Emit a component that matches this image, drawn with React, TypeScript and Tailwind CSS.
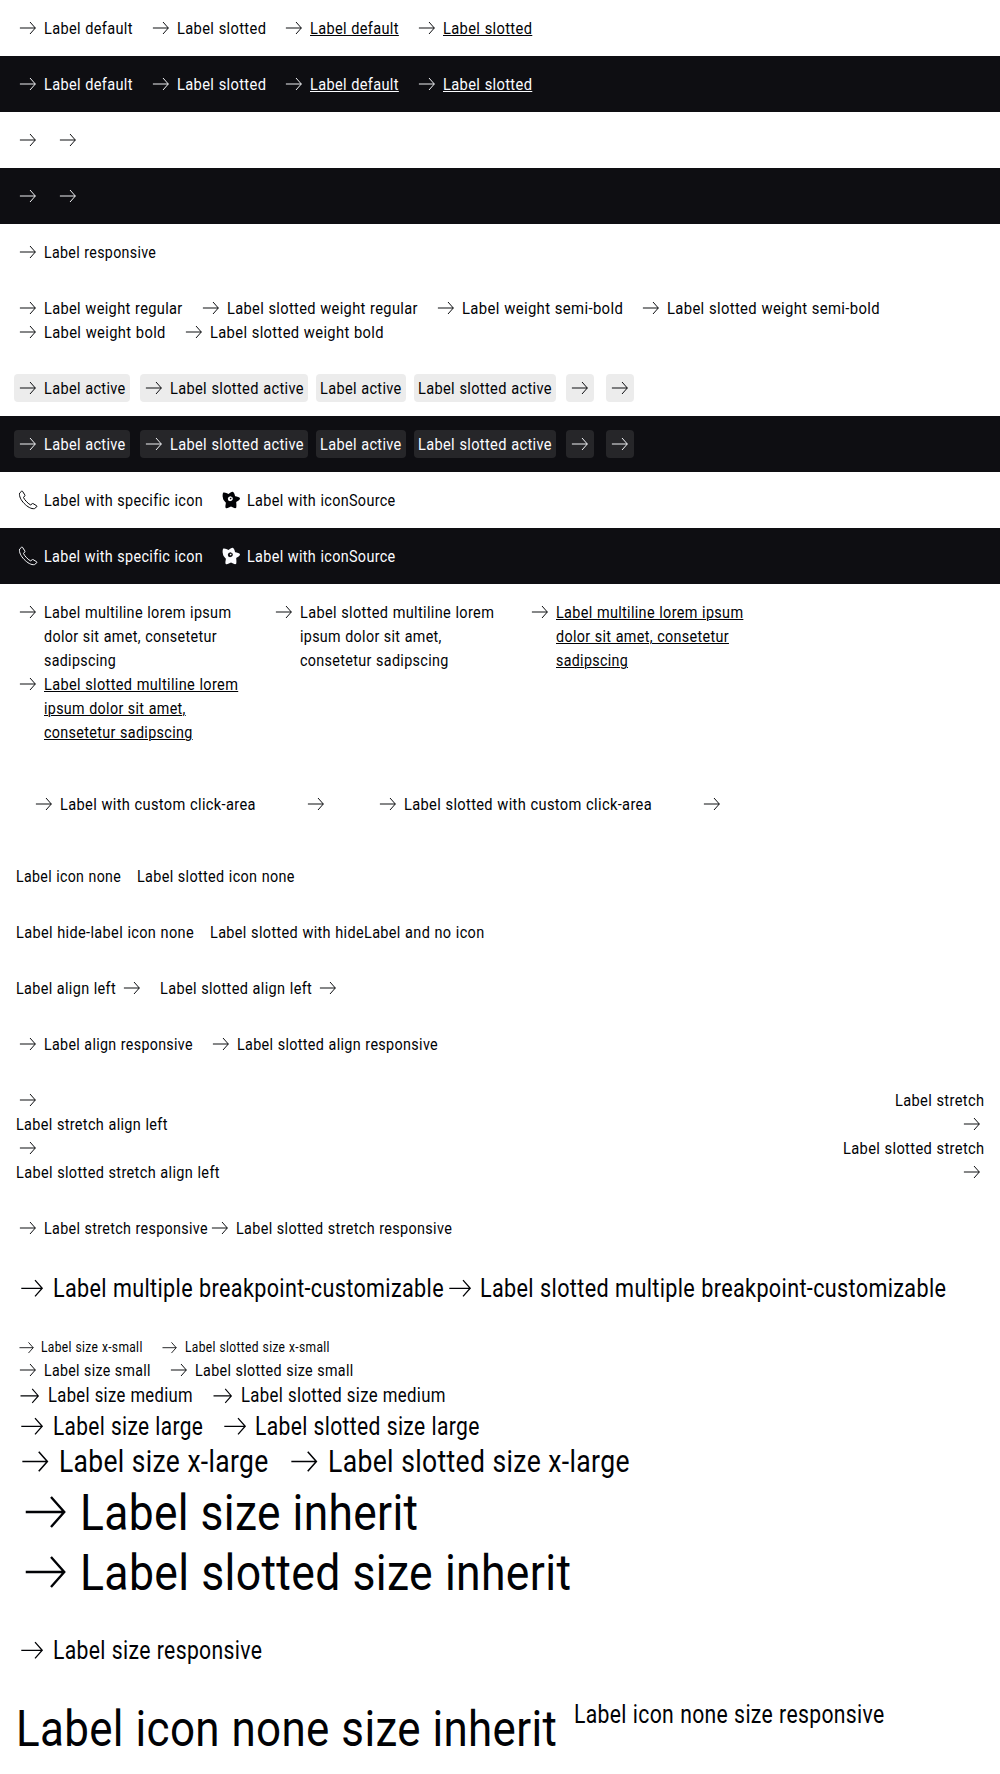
import { useLayoutEffect, useRef, type ReactNode } from 'react';

type Size = 'xs' | 'sm' | 'md' | 'lg' | 'xl' | 'inherit';
type IconName = 'arrow' | 'phone' | 'star' | 'none';

const textSize: Record<Size, string> = {
  xs: 'text-[14px] leading-[21.4px] h-[21.4px]',
  sm: 'text-[17px] leading-[24px] h-6',
  md: 'text-[20.2px] leading-[27.8px] h-[27.8px]',
  lg: 'text-[24.9px] leading-[34.4px] h-[32.6px]',
  xl: 'text-[31px] leading-[40.6px] h-[39.6px]',
  inherit: 'text-[50.6px] leading-[62px] h-[60px]',
};

const iconSize: Record<Size, string> = {
  xs: 'size-[21.4px]',
  sm: 'size-6',
  md: 'size-[27.8px]',
  lg: 'size-[32.6px]',
  xl: 'size-[39px]',
  inherit: 'size-[60px]',
};

/** One line of text, condensed horizontally to the given width. */
function Line({ text, width, size = 'sm', underline }: { text: string; width: number; size?: Size; underline?: boolean }) {
  const ref = useRef<HTMLSpanElement>(null);
  useLayoutEffect(() => {
    const el = ref.current;
    if (!el) return;
    el.style.transform = `scaleX(${width / el.offsetWidth})`;
  }, [text, width]);
  return (
    <span className={`block shrink-0 whitespace-nowrap ${textSize[size]}`} style={{ width }}>
      <span
        ref={ref}
        className={`inline-block origin-left ${underline ? 'underline decoration-1 underline-offset-[1px]' : ''}`}
      >
        {text}
      </span>
    </span>
  );
}

function Icon({ name = 'arrow', size = 'sm' }: { name?: IconName; size?: Size }) {
  return (
    <svg viewBox="0 0 24 24" className={`block shrink-0 ${iconSize[size]}`} fill="none" stroke="currentColor" strokeWidth="0.95">
      {name === 'arrow' && <path d="M3.900 12H19.400M14 6L19.300 12L14 18" />}
      {name === 'phone' && (
        <path
          strokeWidth="1"
          strokeLinejoin="round"
          d="M5.6 3.2L3.6 5.1C2.9 8.2 5 12.2 8.1 15.4C11.400 18.800 15.300 21.200 18.500 20.600L20.900 18.600C21.100 18.300 21 18 20.700 17.800L17.100 15.600C16.800 15.400 16.500 15.500 16.200 15.700L14.700 16.900C12.700 16.300 8.300 11.700 7.500 9.500L8.800 7.800C9 7.500 9 7.200 8.800 6.900L6.500 3.300C6.300 3 5.900 2.900 5.600 3.200Z"
        />
      )}
      {name === 'star' && (
        <path
          stroke="none"
          fill="currentColor"
          fillRule="evenodd"
          d="M13.600 3.800C14.900 3.800 15.600 6.200 16.100 8.200C17.700 8.300 20.900 9.200 21 10.400C21.100 11.700 18.500 13 17.200 13.900C17.300 15.700 17.800 19.300 16.900 20.100C15.700 20.700 13.500 19.200 12 18.600C10.500 19.200 8 20.700 6.800 20C5.900 19.300 6.700 16.300 6.900 14.700C5.600 13.400 3.600 11.300 4 10.100C3.400 8.600 3.500 5.500 4.300 4.600C5.900 4.100 8 5.500 9.500 6C10.800 5.100 12.300 3.800 13.600 3.800ZM11.500 8.300L9.600 9L8.800 10.800L9.300 12.500L11 13.200L13 12.600L13.900 11L13.400 9.200ZM12.200 9.500L12.500 10.800L11.300 11.500L10.700 10.300Z"
        />
      )}
    </svg>
  );
}

interface LinkProps {
  text?: string;
  w?: number;
  size?: Size;
  icon?: IconName;
  underline?: boolean;
  reverse?: boolean;
}

function PureLink({ text, w = 0, size = 'sm', icon = 'arrow', underline, reverse }: LinkProps) {
  return (
    <a className={`flex shrink-0 gap-1 ${reverse ? 'flex-row-reverse' : ''}`}>
      {icon !== 'none' && <Icon name={icon} size={size} />}
      {text && <Line text={text} width={w} size={size} underline={underline} />}
    </a>
  );
}

function ActiveLink({ text, w, icon = 'arrow' }: LinkProps) {
  const inset = icon === 'none' ? '-mx-1 px-1' : text ? '-ml-0.5 pl-0.5 -mr-1 pr-1' : '-mx-0.5 px-0.5';
  return (
    <span className={`-my-0.5 rounded-[4px] bg-[#949598]/18 py-0.5 ${inset}`}>
      <PureLink text={text} w={w} icon={icon} />
    </span>
  );
}

function Row({ dark, className = 'gap-4 p-4', children }: { dark?: boolean; className?: string; children: ReactNode }) {
  return (
    <section className={`flex ${dark ? 'bg-[#0e0e12] text-[#fbfcff]' : 'bg-white text-[#010205]'} ${className}`}>
      {children}
    </section>
  );
}

function Multiline({ lines, underline }: { lines: [string, number][]; underline?: boolean }) {
  return (
    <a className="flex w-60 gap-1">
      <Icon />
      <span>
        {lines.map(([text, w]) => (
          <Line key={text} text={text} width={w} underline={underline} />
        ))}
      </span>
    </a>
  );
}

function Stretch({ right, rightWidth, left, leftWidth }: { right: string; rightWidth: number; left: string; leftWidth: number }) {
  return (
    <>
      <a className="flex justify-between">
        <Icon />
        <Line text={right} width={rightWidth} />
      </a>
      <a className="flex justify-between">
        <Line text={left} width={leftWidth} />
        <Icon />
      </a>
    </>
  );
}

const plainLines: [string, number][] = [
  ['Label multiline lorem ipsum', 187.5],
  ['dolor sit amet, consetetur', 173],
  ['sadipscing', 72],
];
const slottedLines: [string, number][] = [
  ['Label slotted multiline lorem', 194],
  ['ipsum dolor sit amet,', 142],
  ['consetetur sadipscing', 148.5],
];

export default function App() {
  return (
    <main className="h-[1774px] w-[1000px] overflow-hidden bg-white font-[Roboto,sans-serif] font-normal tracking-[0.025em] [word-spacing:0.03em]">
      {[false, true].map((dark) => (
        <Row key={String(dark)} dark={dark}>
          <PureLink text="Label default" w={89} />
          <PureLink text="Label slotted" w={89} />
          <PureLink text="Label default" w={89} underline />
          <PureLink text="Label slotted" w={89} underline />
        </Row>
      ))}
      {[false, true].map((dark) => (
        <Row key={String(dark)} dark={dark}>
          <PureLink />
          <PureLink />
        </Row>
      ))}
      <Row>
        <PureLink text="Label responsive" w={112} />
      </Row>
      <Row className="flex-wrap gap-x-4 p-4">
        <PureLink text="Label weight regular" w={139} />
        <PureLink text="Label slotted weight regular" w={191} />
        <PureLink text="Label weight semi-bold" w={161} />
        <PureLink text="Label slotted weight semi-bold" w={212.5} />
        <PureLink text="Label weight bold" w={122} />
        <PureLink text="Label slotted weight bold" w={174} />
      </Row>
      {[false, true].map((dark) => (
        <Row key={String(dark)} dark={dark}>
          <ActiveLink text="Label active" w={82} />
          <ActiveLink text="Label slotted active" w={134} />
          <ActiveLink text="Label active" w={82} icon="none" />
          <ActiveLink text="Label slotted active" w={134} icon="none" />
          <ActiveLink />
          <ActiveLink />
        </Row>
      ))}
      {[false, true].map((dark) => (
        <Row key={String(dark)} dark={dark}>
          <PureLink text="Label with specific icon" w={159} icon="phone" />
          <PureLink text="Label with iconSource" w={149} icon="star" />
        </Row>
      ))}
      <Row className="flex-wrap gap-x-4 p-4">
        <Multiline lines={plainLines} />
        <Multiline lines={slottedLines} />
        <Multiline lines={plainLines} underline />
        <Multiline lines={slottedLines} underline />
      </Row>
      <Row className="gap-12 p-8">
        <PureLink text="Label with custom click-area" w={196} />
        <PureLink />
        <PureLink text="Label slotted with custom click-area" w={248} />
        <PureLink />
      </Row>
      <Row>
        <PureLink text="Label icon none" w={105} icon="none" />
        <PureLink text="Label slotted icon none" w={157.5} icon="none" />
      </Row>
      <Row>
        <PureLink text="Label hide-label icon none" w={178} icon="none" />
        <PureLink text="Label slotted with hideLabel and no icon" w={274.5} icon="none" />
      </Row>
      <Row>
        <PureLink text="Label align left" w={100} reverse />
        <PureLink text="Label slotted align left" w={152} reverse />
      </Row>
      <Row>
        <PureLink text="Label align responsive" w={149} />
        <PureLink text="Label slotted align responsive" w={201} />
      </Row>
      <Row className="flex-col p-4">
        <Stretch right="Label stretch" rightWidth={89.5} left="Label stretch align left" leftWidth={152} />
        <Stretch right="Label slotted stretch" rightWidth={141.5} left="Label slotted stretch align left" leftWidth={204} />
      </Row>
      <Row className="p-4">
        <PureLink text="Label stretch responsive" w={164} />
        <PureLink text="Label slotted stretch responsive" w={216} />
      </Row>
      <Row className="p-4">
        <PureLink size="lg" text="Label multiple breakpoint-customizable" w={391} />
        <PureLink size="lg" text="Label slotted multiple breakpoint-customizable" w={466} />
      </Row>
      <Row className="flex-col p-4">
        <div className="flex gap-4">
          <PureLink size="xs" text="Label size x-small" w={102} />
          <PureLink size="xs" text="Label slotted size x-small" w={145} />
        </div>
        <div className="flex gap-4">
          <PureLink size="sm" text="Label size small" w={106.5} />
          <PureLink size="sm" text="Label slotted size small" w={159} />
        </div>
        <div className="flex gap-4">
          <PureLink size="md" text="Label size medium" w={145} />
          <PureLink size="md" text="Label slotted size medium" w={205} />
        </div>
        <div className="flex gap-4">
          <PureLink size="lg" text="Label size large" w={150} />
          <PureLink size="lg" text="Label slotted size large" w={225} />
        </div>
        <div className="flex gap-4">
          <PureLink size="xl" text="Label size x-large" w={209.5} />
          <PureLink size="xl" text="Label slotted size x-large" w={302} />
        </div>
        <PureLink size="inherit" text="Label size inherit" w={338} />
        <PureLink size="inherit" text="Label slotted size inherit" w={491} />
      </Row>
      <Row>
        <PureLink size="lg" text="Label size responsive" w={209} />
      </Row>
      <Row className="gap-4 px-4 pt-[15px]">
        <PureLink size="inherit" icon="none" text="Label icon none size inherit" w={541.5} />
        <PureLink size="lg" icon="none" text="Label icon none size responsive" w={311} />
      </Row>
    </main>
  );
}
